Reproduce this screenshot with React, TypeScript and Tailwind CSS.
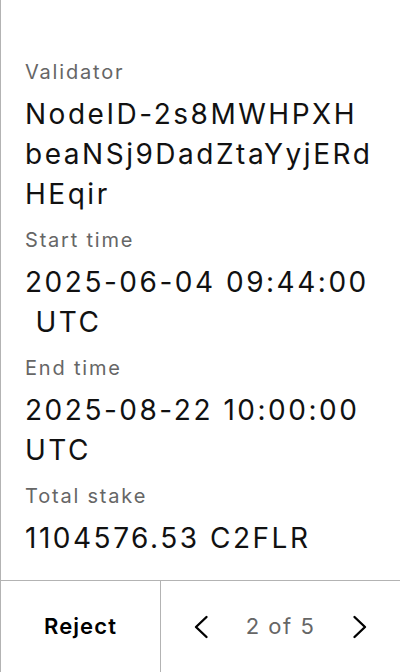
import React from 'react'

type Field = {
  label: string
  value: string
  breakAll?: boolean
}

const FIELDS: Field[] = [
  { label: 'Validator', value: 'NodeID-2s8MWHPXHbeaNSj9DadZtaYyjERdHEqir', breakAll: true },
  // nbsp keeps the space visible once UTC wraps onto its own line
  { label: 'Start time', value: '2025-06-04 09:44:00 \u00a0UTC' },
  { label: 'End time', value: '2025-08-22 10:00:00 UTC' },
  { label: 'Total stake', value: '1104576.53 C2FLR' },
]

function Chevron({ dir }: { dir: 'left' | 'right' }) {
  return (
    <svg width="16" height="24" viewBox="0 0 16 24" fill="none" aria-hidden="true">
      <path
        d={dir === 'left' ? 'M13.5 2 L3 12 L13.5 22' : 'M2.5 2 L13 12 L2.5 22'}
        stroke="#000"
        strokeWidth="2.4"
        strokeLinecap="round"
        strokeLinejoin="round"
      />
    </svg>
  )
}

export default function App() {
  return (
    <div
      className="flex h-[672px] w-[400px] flex-col border-l border-[#b3b3b3] bg-white text-black"
      style={{ fontFamily: 'Inter, "Noto Sans", sans-serif' }}
    >
      <div className="flex flex-1 flex-col gap-3 px-6 pt-[58px]">
        {FIELDS.map((field) => (
          <div key={field.label} className="flex flex-col">
            <p className="text-[20px] leading-7 tracking-[0.09em] text-[#666666]">{field.label}</p>
            <p
              className={`mt-2 text-[28px] leading-10 tracking-[0.09em] text-[#111111] ${field.breakAll ? 'break-all' : ''}`}
            >
              {field.value}
            </p>
          </div>
        ))}
      </div>

      <div className="flex h-[92px] border-t border-[#b3b3b3]">
        <button
          type="button"
          className="flex w-[159px] items-center justify-center text-[22px] font-semibold tracking-[0.05em]"
        >
          Reject
        </button>
        <div className="flex flex-1 items-center justify-between border-l border-[#b3b3b3] px-8">
          <button type="button" className="flex items-center">
            <Chevron dir="left" />
          </button>
          <span className="text-[22px] tracking-[0.07em] text-[#666666]">2 of 5</span>
          <button type="button" className="flex items-center">
            <Chevron dir="right" />
          </button>
        </div>
      </div>
    </div>
  )
}
